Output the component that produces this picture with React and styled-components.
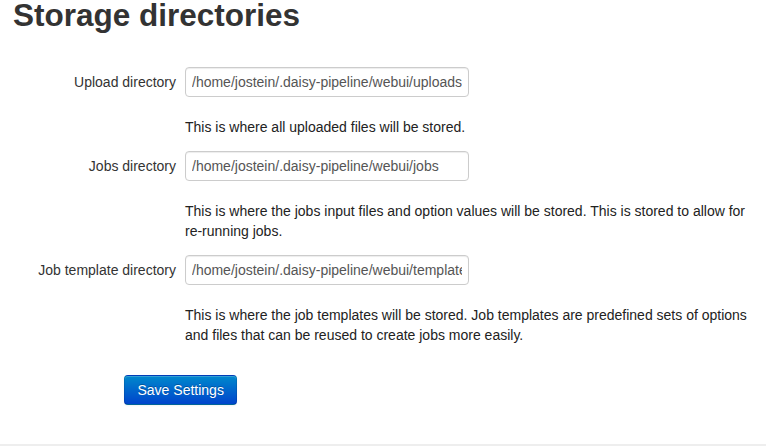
import React from "react";
import styled, { createGlobalStyle } from "styled-components";

const GlobalStyle = createGlobalStyle`
  html, body {
    margin: 0;
    padding: 0;
    background: #fff;
    overflow: hidden;
  }
  body {
    font-family: "Liberation Sans", Helvetica, Arial, sans-serif;
    font-size: 14px;
    line-height: 20px;
    color: #333;
  }
`;

const Page = styled.div`
  padding-left: 13px;
  width: 766px;
  box-sizing: border-box;
`;

const Heading = styled.h2`
  margin: -5px 0 32px;
  font-size: 31.5px;
  line-height: 40px;
  font-weight: bold;
  color: #333;
`;

const Form = styled.form`
  display: flex;
  flex-direction: column;
  gap: 14px;
`;

const Group = styled.div`
  display: grid;
  grid-template-columns: 163px 570px;
  column-gap: 9px;
`;

const Label = styled.label`
  text-align: right;
  padding-top: 5px;
  color: #333;
`;

const Controls = styled.div`
  display: flex;
  flex-direction: column;
`;

const Input = styled.input`
  width: 270px;
  height: 20px;
  padding: 4px 6px;
  font-family: inherit;
  font-size: 14px;
  line-height: 20px;
  color: #555;
  background: #fff;
  border: 1px solid #ccc;
  border-radius: 4px;
  box-shadow: inset 0 1px 1px rgba(0, 0, 0, 0.075);
  outline: none;
`;

const Help = styled.p`
  margin: 20px 0 0;
  color: #222;
`;

const Actions = styled.div`
  padding-left: 111px;
  margin-top: 16px;
`;

const SaveButton = styled.button`
  font-family: inherit;
  font-size: 14px;
  line-height: 20px;
  padding: 4px 12.5px;
  color: #fff;
  text-shadow: 0 -1px 0 rgba(0, 0, 0, 0.25);
  background-image: linear-gradient(to bottom, #0088cc, #0044cc);
  border: 1px solid #0044aa;
  border-color: rgba(0, 0, 0, 0.1) rgba(0, 0, 0, 0.1) rgba(0, 0, 0, 0.25);
  border-radius: 4px;
  box-shadow: inset 0 1px 0 rgba(255, 255, 255, 0.2),
    0 1px 2px rgba(0, 0, 0, 0.05);
  cursor: pointer;
`;

const Footer = styled.div`
  margin: 39px 0 0 -13px;
  height: 10px;
  border-top: 2px solid #eeeeee;
`;

const fields = [
  {
    id: "upload",
    label: "Upload directory",
    value: "/home/jostein/.daisy-pipeline/webui/uploads",
    help: "This is where all uploaded files will be stored.",
  },
  {
    id: "jobs",
    label: "Jobs directory",
    value: "/home/jostein/.daisy-pipeline/webui/jobs",
    help:
      "This is where the jobs input files and option values will be stored. This is stored to allow for re-running jobs.",
  },
  {
    id: "templates",
    label: "Job template directory",
    value: "/home/jostein/.daisy-pipeline/webui/templates",
    help:
      "This is where the job templates will be stored. Job templates are predefined sets of options and files that can be reused to create jobs more easily.",
  },
];

const App = () => {
  return (
    <Page>
      <GlobalStyle />
      <Heading>Storage directories</Heading>
      <Form onSubmit={(e) => e.preventDefault()}>
        {fields.map((field) => (
          <Group key={field.id}>
            <Label htmlFor={field.id}>{field.label}</Label>
            <Controls>
              <Input id={field.id} type="text" defaultValue={field.value} />
              <Help>{field.help}</Help>
            </Controls>
          </Group>
        ))}
        <Actions>
          <SaveButton type="submit">Save Settings</SaveButton>
        </Actions>
      </Form>
      <Footer />
    </Page>
  );
};

export default App;
